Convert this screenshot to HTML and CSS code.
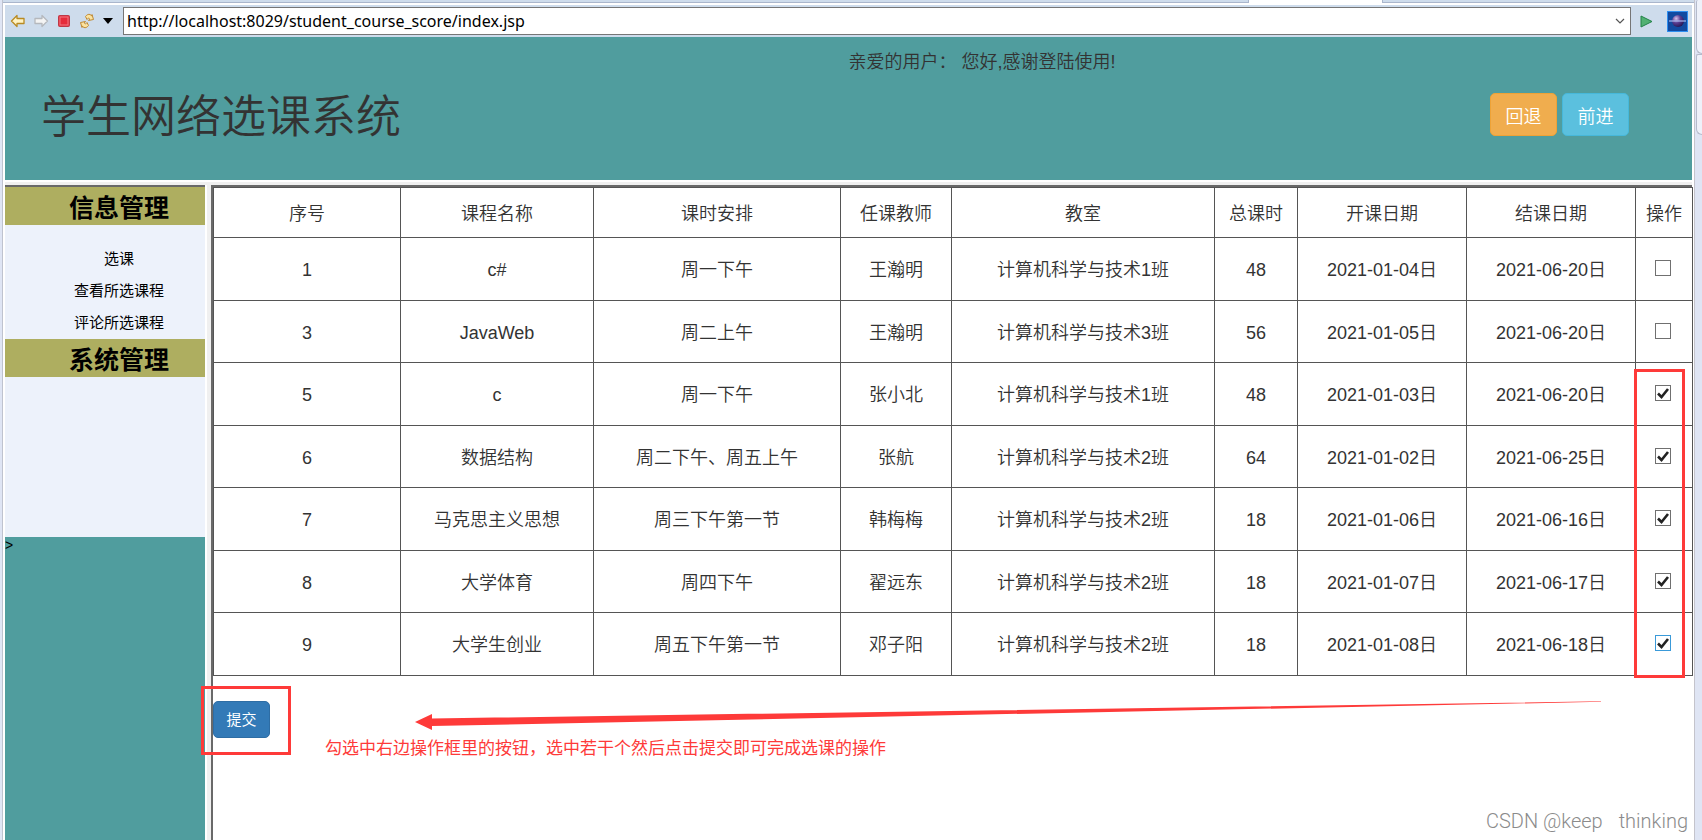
FILE: index.html
```html
<!DOCTYPE html>
<html lang="zh-CN">
<head>
<meta charset="utf-8">
<title>学生网络选课系统</title>
<link rel="stylesheet" href="styles.css">
</head>
<body>
<div class="workbench">
  <div class="tabs"><span class="tab-active"></span></div>
  <div class="toolbar">
    <button class="tool" type="button" aria-label="后退"><svg width="16" height="16" viewBox="0 0 16 16"><path d="M1.500 8 7 2.500V5.500H14V10.500H7V13.500Z" fill="#fff3c4" stroke="#b98a22" stroke-width="1.300" stroke-linejoin="round"/></svg></button>
    <button class="tool" type="button" aria-label="前进"><svg width="16" height="16" viewBox="0 0 16 16"><path d="M14.500 8 9 2.500V5.500H2V10.500H9V13.500Z" fill="#f4f4f4" stroke="#b5b8bd" stroke-width="1.300" stroke-linejoin="round"/></svg></button>
    <button class="tool" type="button" aria-label="停止"><svg width="16" height="16" viewBox="0 0 16 16"><rect x="2.500" y="2.500" width="11" height="11" rx="1" fill="#e62b3a" stroke="#bd3846"/><rect x="4" y="4" width="8" height="8" fill="none" stroke="#f07a84"/></svg></button>
    <button class="tool" type="button" aria-label="刷新"><svg width="16" height="16" viewBox="0 0 16 16"><path d="M6.500 3.500C8 1.500 9.500 1 11 1.500L13 3V1.500L14.500 6.500 9.500 7.500 10.800 6 9.500 5 8 6.500ZM9.500 12.500C8 14.500 6.500 15 5 14.500L3 13V14.500L1.500 9.500 6.500 8.500 5.200 10 6.500 11 8 9.500Z" fill="#fbe3a0" stroke="#c08a35"/></svg></button>
    <button class="tool tool-menu" type="button" aria-label="菜单"><svg width="10" height="6" viewBox="0 0 10 6"><path d="M0 0H10L5 6Z" fill="#000"/></svg></button>
    <div class="address">
      <input class="url" type="text" aria-label="地址" value="http://localhost:8029/student_course_score/index.jsp">
      <svg width="10" height="7" viewBox="0 0 10 7"><path d="M1 1 5 5 9 1" fill="none" stroke="#555" stroke-width="1.200"/></svg>
    </div>
    <button class="tool go" type="button" aria-label="转到"><svg width="13" height="13" viewBox="0 0 13 13"><path d="M1 1 12 6.500 1 12Z" fill="#52b173" stroke="#238249"/></svg></button>
    <button class="tool eclipse" type="button" aria-label="浏览器"><svg width="21" height="21" viewBox="0 0 21 21"><defs><radialGradient id="orb" cx="0.350" cy="0.300" r="0.800"><stop offset="0" stop-color="#d9c2ec"/><stop offset="0.450" stop-color="#5b3d92"/><stop offset="1" stop-color="#1d1149"/></radialGradient></defs><rect x="0.500" y="0.500" width="20" height="20" fill="#124aa0" stroke="#2f8ff0"/><circle cx="11" cy="10" r="6" fill="url(#orb)"/><path d="M2 10H19" stroke="#a6b7ee" stroke-width="1.200"/></svg></button>
  </div>

  <header class="banner">
    <h1 class="title">学生网络选课系统</h1>
    <p class="greeting">亲爱的用户： 您好,感谢登陆使用!</p>
    <div class="nav-buttons">
      <button class="btn btn-back" type="button">回退</button>
      <button class="btn btn-forward" type="button">前进</button>
    </div>
  </header>

  <div class="frames">
    <aside class="sidebar">
      <nav class="menu">
        <h2 class="menu-title">信息管理</h2>
        <ul class="menu-list">
          <li><a href="#">选课</a></li>
          <li><a href="#">查看所选课程</a></li>
          <li><a href="#">评论所选课程</a></li>
        </ul>
        <h2 class="menu-title">系统管理</h2>
      </nav>
      <span class="stray">&gt;</span>
    </aside>
    <main class="content">
      <form>
        <table class="courses">
          <colgroup><col class="c-no"><col class="c-name"><col class="c-time"><col class="c-teacher"><col class="c-room"><col class="c-hours"><col class="c-date"><col class="c-date"><col class="c-op"></colgroup>
          <thead>
            <tr><th>序号</th><th>课程名称</th><th>课时安排</th><th>任课教师</th><th>教室</th><th>总课时</th><th>开课日期</th><th>结课日期</th><th>操作</th></tr>
          </thead>
          <tbody>
            <tr><td>1</td><td>c#</td><td>周一下午</td><td>王瀚明</td><td>计算机科学与技术1班</td><td>48</td><td>2021-01-04日</td><td>2021-06-20日</td><td><input class="pick" type="checkbox" aria-label="选择 c#"></td></tr>
            <tr><td>3</td><td>JavaWeb</td><td>周二上午</td><td>王瀚明</td><td>计算机科学与技术3班</td><td>56</td><td>2021-01-05日</td><td>2021-06-20日</td><td><input class="pick" type="checkbox" aria-label="选择 JavaWeb"></td></tr>
            <tr><td>5</td><td>c</td><td>周一下午</td><td>张小北</td><td>计算机科学与技术1班</td><td>48</td><td>2021-01-03日</td><td>2021-06-20日</td><td><input class="pick" type="checkbox" aria-label="选择 c" checked></td></tr>
            <tr><td>6</td><td>数据结构</td><td>周二下午、周五上午</td><td>张航</td><td>计算机科学与技术2班</td><td>64</td><td>2021-01-02日</td><td>2021-06-25日</td><td><input class="pick" type="checkbox" aria-label="选择 数据结构" checked></td></tr>
            <tr><td>7</td><td>马克思主义思想</td><td>周三下午第一节</td><td>韩梅梅</td><td>计算机科学与技术2班</td><td>18</td><td>2021-01-06日</td><td>2021-06-16日</td><td><input class="pick" type="checkbox" aria-label="选择 马克思主义思想" checked></td></tr>
            <tr><td>8</td><td>大学体育</td><td>周四下午</td><td>翟远东</td><td>计算机科学与技术2班</td><td>18</td><td>2021-01-07日</td><td>2021-06-17日</td><td><input class="pick" type="checkbox" aria-label="选择 大学体育" checked></td></tr>
            <tr><td>9</td><td>大学生创业</td><td>周五下午第一节</td><td>邓子阳</td><td>计算机科学与技术2班</td><td>18</td><td>2021-01-08日</td><td>2021-06-18日</td><td><input class="pick pick-hot" type="checkbox" aria-label="选择 大学生创业" checked></td></tr>
          </tbody>
        </table>
        <button class="btn btn-submit" type="button">提交</button>
      </form>
      <div class="mark mark-submit"></div>
      <div class="mark mark-picks"></div>
      <svg class="arrow" viewBox="0 0 1190 32" preserveAspectRatio="none"><path d="M0 21 17 13V17.500L1187 0.300V0.800L17 25V29Z" fill="#fe3a39"/></svg>
      <p class="note">勾选中右边操作框里的按钮，选中若干个然后点击提交即可完成选课的操作</p>
      <p class="watermark">CSDN @keep<span>thinking</span></p>
    </main>
  </div>
</div>
<div class="side-strip"><span class="side-tab side-tab-first"></span><span class="side-tab side-tab-second"></span></div>
</body>
</html>
```
FILE: styles.css
```css
* { box-sizing: border-box; }

body {
  margin: 0;
  min-height: 100vh;
  display: flex;
  background: #dfe5f4;
  color: #333;
  font-family: "Liberation Sans", "Noto Sans CJK SC", sans-serif;
  font-size: 18px;
  overflow: hidden;
}

h1, h2, p, ul { margin: 0; padding: 0; }
button { font-family: inherit; }

.workbench {
  flex: 1;
  min-width: 0;
  display: flex;
  flex-direction: column;
  margin-left: 2px;
  padding: 0 2px;
  background: #fff;
  border-left: 1px solid #bfc3cf;
  border-right: 1px solid #c4c4cc;
}

.tabs {
  height: 3px;
  margin: 0 -2px 2px;
  display: flex;
  background: #cedcec;
  border-bottom: 1px solid #aab6cc;
}
.tab-active {
  width: 135px;
  height: 3px;
  margin-left: auto;
  margin-right: 311px;
  background: #fff;
  border: solid #aab6cc;
  border-width: 0 1px;
}

.toolbar {
  height: 32px;
  display: flex;
  align-items: center;
  padding: 0 4px;
  background: #cedcec;
}
.tool {
  display: flex;
  padding: 0;
  margin-right: 7px;
  border: 0;
  background: none;
}
.tool:first-child { margin-left: 1px; }
.tool-menu { margin: 0 10px 0 1px; }
.address {
  flex: 1;
  height: 28px;
  display: flex;
  align-items: center;
  padding-right: 5px;
  background: #fff;
  border: 1px solid #767676;
}
.url {
  flex: 1;
  min-width: 0;
  padding: 0 3px;
  border: 0;
  outline: 0;
  color: #000;
  font-family: "Noto Sans", sans-serif;
  font-size: 16px;
}
.go { margin: 0 14px 0 9px; }
.eclipse { margin-right: 0; }

.banner {
  position: relative;
  height: 143px;
  display: flex;
  align-items: center;
  padding: 12px 63px 0 36px;
  background: #509d9e;
}
.title {
  flex: 1;
  padding-top: 6px;
  font-size: 45px;
  line-height: 60px;
  font-weight: 350;
}
.greeting {
  position: absolute;
  top: 13px;
  left: 50%;
  line-height: 24px;
  font-weight: 350;
}
.nav-buttons { display: flex; gap: 5px; }

.btn {
  border: 1px solid;
  border-radius: 5px;
  color: #fff;
}
.btn-back, .btn-forward {
  width: 67px;
  height: 43px;
  font-size: 18px;
  font-weight: 350;
}
.btn-back { background: #f0ad4e; border-color: #eea236; }
.btn-forward { background: #5bc0de; border-color: #46b8da; }
.btn-submit {
  display: block;
  width: 57px;
  height: 37px;
  margin-top: 25px;
  padding: 0 0 2px;
  background: #337ab7;
  border-color: #2e6da4;
  font-size: 15px;
}

.frames {
  flex: 1;
  display: flex;
  margin-top: 2px;
  border-top: 3px solid #f0f0f0;
}
.sidebar {
  width: 200px;
  background: #509d9e;
  border-top: 2px solid #696969;
}
.menu {
  height: 350px;
  background: #edf2fb;
}
.menu-title {
  height: 38px;
  padding-left: 28px;
  background: #aeae60;
  color: #000;
  font-size: 25px;
  line-height: 42px;
  text-align: center;
}
.menu-list {
  height: 114px;
  padding: 18px 0 0 28px;
  list-style: none;
  text-align: center;
  font-size: 15px;
  line-height: 32px;
}
.menu-list a { color: #000; text-decoration: none; }
.stray {
  display: block;
  color: #000;
  font-size: 14px;
  line-height: 16px;
}

.content {
  position: relative;
  flex: 1;
  min-width: 0;
  margin-left: 6px;
  border-left: 2px solid #696969;
  border-top: 2px solid #696969;
  box-shadow: -4px 0 0 #f0f0f0;
}
.courses {
  width: 100%;
  table-layout: fixed;
  border-collapse: collapse;
}
.courses th, .courses td {
  height: 62px;
  padding: 2px 0 0;
  border: 1px solid #555;
  font-weight: 350;
  line-height: 24px;
  text-align: center;
  vertical-align: middle;
}
.courses th { height: 50px; }
.courses tbody tr:nth-child(odd) td { height: 63px; }
.courses td:last-child { padding: 0 2px 2px 0; }
.c-no { width: 187px; }
.c-name { width: 193px; }
.c-time { width: 247px; }
.c-teacher { width: 111px; }
.c-room { width: 263px; }
.c-hours { width: 83px; }
.c-date { width: 169px; }
.c-op { width: 57px; }

.pick {
  appearance: none;
  display: block;
  width: 16px;
  height: 16px;
  margin: 0 auto;
  background: #fff;
  border: 1px solid #707070;
}
.pick:checked {
  background: url("data:image/svg+xml,%3Csvg xmlns='http://www.w3.org/2000/svg' viewBox='0 0 14 14'%3E%3Cpath d='M2 7.500 5.500 11 12 3' fill='none' stroke='%23222' stroke-width='2.600'/%3E%3C/svg%3E") center / 14px 14px no-repeat #fff;
}
.pick-hot { border-color: #3a9ad9; }

.mark {
  position: absolute;
  border: 3px solid #fe3a39;
}
.mark-submit { left: -12px; top: 499px; width: 90px; height: 69px; }
.mark-picks { right: 7px; top: 182px; width: 51px; height: 309px; }
.arrow {
  position: absolute;
  left: 202px;
  top: 514px;
  width: calc(100% - 290px);
  height: 32px;
}
.note {
  position: absolute;
  left: 112px;
  top: 550px;
  color: #fe3a39;
  font-size: 17px;
  line-height: 24px;
  white-space: nowrap;
}
.watermark {
  position: absolute;
  right: 4px;
  bottom: 7px;
  display: flex;
  gap: 16px;
  color: #8b8b8b;
  font-size: 20px;
  line-height: 24px;
  font-family: Roboto, sans-serif;
  font-weight: 300;
}

.side-strip {
  width: 7px;
  display: flex;
  flex-direction: column;
  padding-left: 1px;
}
.side-tab {
  border: 1px solid #b4bacb;
  border-right: 0;
  border-radius: 2px 0 0 6px;
  background: #eef1fa;
}
.side-tab-first { height: 54px; border-top: 0; }
.side-tab-second { height: 81px; }
```
